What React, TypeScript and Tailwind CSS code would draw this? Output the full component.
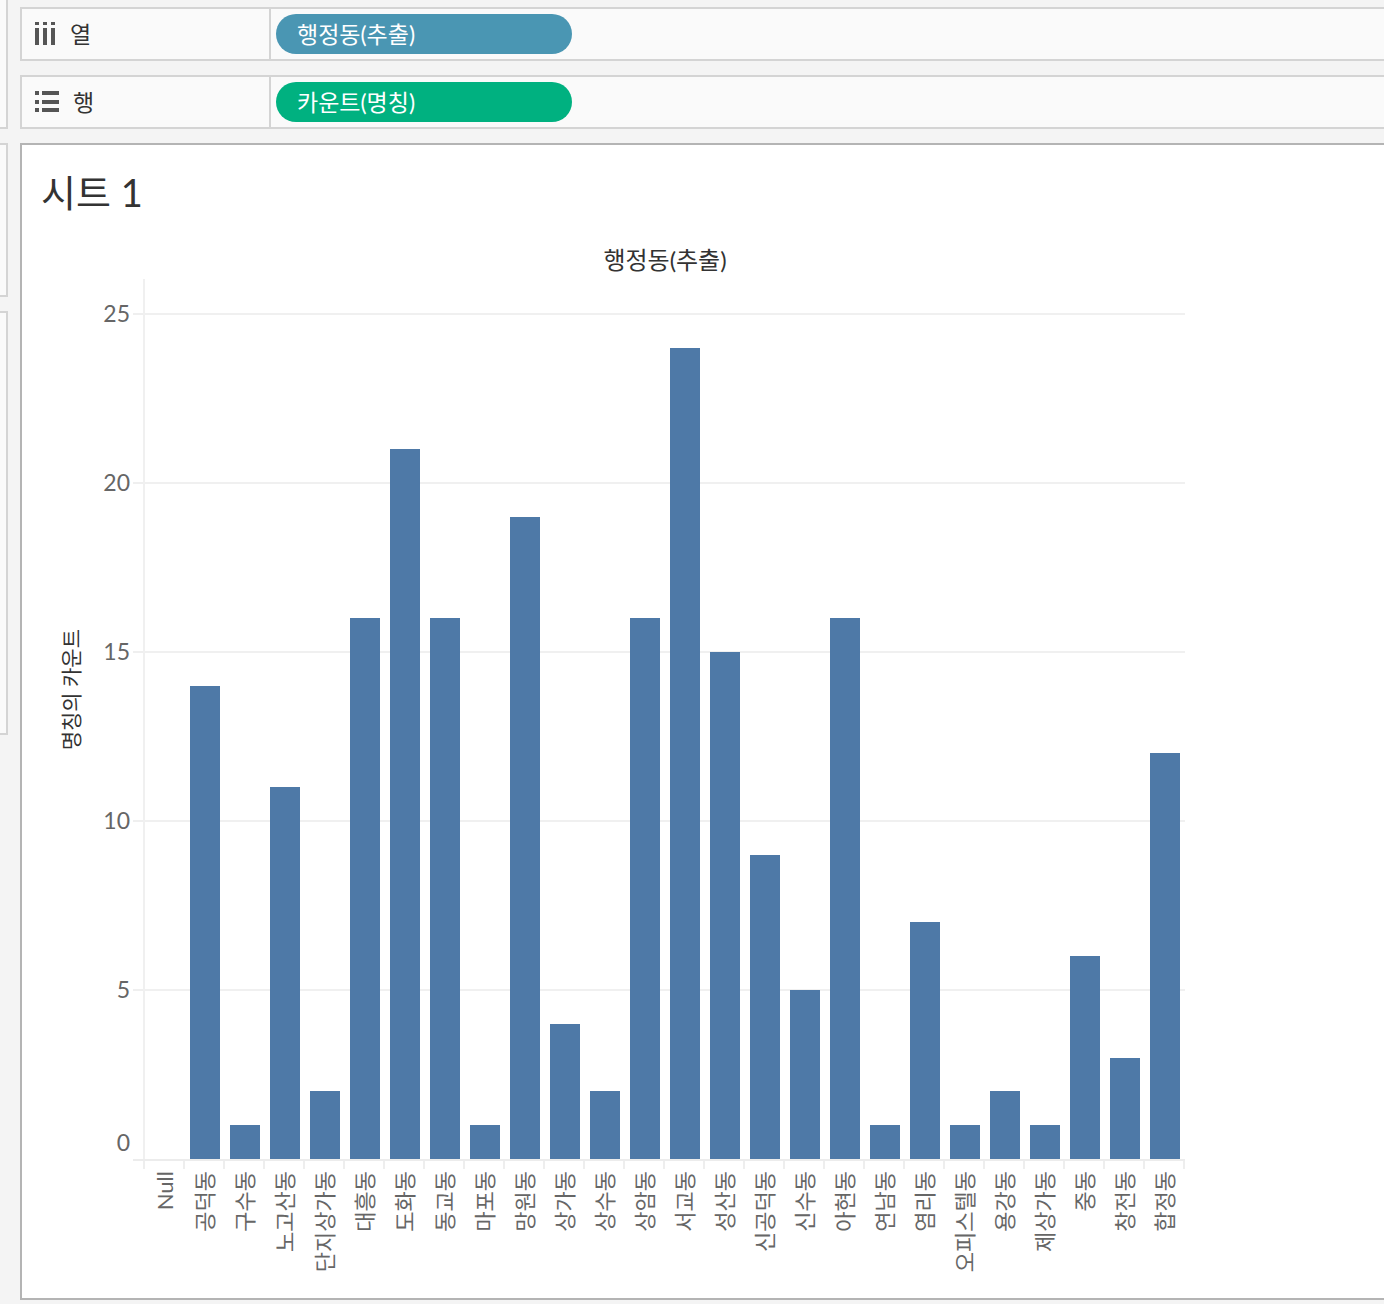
import React from "react";

const PX = 33.8;
const PLOT_H = 880;

const data: [string, number][] = [
  ["Null", 0],
  ["공덕동", 14],
  ["구수동", 1],
  ["노고산동", 11],
  ["단지상가동", 2],
  ["대흥동", 16],
  ["도화동", 21],
  ["동교동", 16],
  ["마포동", 1],
  ["망원동", 19],
  ["상가동", 4],
  ["상수동", 2],
  ["상암동", 16],
  ["서교동", 24],
  ["성산동", 15],
  ["신공덕동", 9],
  ["신수동", 5],
  ["아현동", 16],
  ["연남동", 1],
  ["염리동", 7],
  ["오피스텔동", 1],
  ["용강동", 2],
  ["제상가동", 1],
  ["중동", 6],
  ["창전동", 3],
  ["합정동", 12],
];

const ticks = [25, 20, 15, 10, 5, 0];

const ColumnsIcon = () => (
  <svg width="22" height="24" viewBox="0 0 22 24" fill="#555">
    <rect x="0" y="0" width="4" height="3" />
    <rect x="0" y="6" width="4" height="17" />
    <rect x="8" y="0" width="4" height="3" />
    <rect x="8" y="6" width="4" height="17" />
    <rect x="16" y="0" width="4" height="3" />
    <rect x="16" y="6" width="4" height="17" />
  </svg>
);

const RowsIcon = () => (
  <svg width="25" height="22" viewBox="0 0 25 22" fill="#555">
    <rect x="0" y="0" width="4" height="4" />
    <rect x="7" y="0" width="17" height="4" />
    <rect x="0" y="9" width="4" height="4" />
    <rect x="7" y="9" width="17" height="4" />
    <rect x="0" y="17" width="4" height="4" />
    <rect x="7" y="17" width="17" height="4" />
  </svg>
);

const Shelf = ({
  icon,
  label,
  pill,
  color,
}: {
  icon: React.ReactNode;
  label: string;
  pill: string;
  color: string;
}) => (
  <div className="flex h-[54px] w-[1380px] border-2 border-r-0 border-[#d4d4d4] bg-[#fafafa]">
    <div className="flex w-[249px] items-center gap-[13px] border-r-2 border-[#d4d4d4] pl-[13px]">
      {icon}
      <span className="text-[23px] leading-none text-[#333]">{label}</span>
    </div>
    <div className="flex items-center pl-[5px]">
      <div
        className={`flex h-[40px] w-[296px] items-center rounded-full pl-[21px] text-[23px] text-white ${color}`}
      >
        {pill}
      </div>
    </div>
  </div>
);

export default function App() {
  return (
    <div className="flex h-[1304px] w-[1384px] overflow-hidden bg-[#f4f4f4] font-['Lato','Noto_Sans_CJK_KR',sans-serif]">
      {/* side panels, cut off at the left edge */}
      <div className="flex w-[8px] shrink-0 flex-col gap-[14px]">
        <div className="h-[129px] border-b-2 border-r-2 border-[#d4d4d4] bg-[#fafafa]" />
        <div className="h-[154px] border-y-2 border-r-2 border-[#d4d4d4] bg-[#fafafa]" />
        <div className="h-[424px] border-y-2 border-r-2 border-[#d4d4d4] bg-[#fafafa]" />
      </div>

      <div className="ml-[12px] flex flex-col pt-[7px]">
        <Shelf icon={<ColumnsIcon />} label="열" pill="행정동(추출)" color="bg-[#4a96b3]" />
        <div className="h-[14px]" />
        <Shelf icon={<RowsIcon />} label="행" pill="카운트(명칭)" color="bg-[#00b180]" />
        <div className="h-[14px]" />

        {/* sheet */}
        <div className="h-[1157px] w-[1380px] overflow-hidden border-2 border-r-0 border-[#b4b4b4] bg-white">
          <div className="pl-[19px] pt-[25px] text-[38px] leading-[44px] text-[#333]">시트 1</div>

          <div className="mt-[32px] flex">
            <div className="w-[123px]" />
            <div className="w-[1040px] text-center text-[24px] leading-[28px] text-[#333]">행정동(추출)</div>
          </div>

          <div className="mt-[5px] flex">
            {/* y axis */}
            <div className="relative flex h-[880px] w-[123px] border-r-2 border-[#f0f0f0]">
              <div className="flex w-[96px] items-start justify-center pt-[350px]">
                <span className="rotate-180 text-[21px] leading-none text-[#333] [text-orientation:sideways] [writing-mode:vertical-rl]">
                  명칭의 카운트
                </span>
              </div>
              {ticks.map((v) => (
                <React.Fragment key={v}>
                  <div
                    className="absolute right-[13px] text-[23px] leading-[22px] text-[#666]"
                    style={{ top: v === 0 ? 852 : PLOT_H - v * PX - 12 }}
                  >
                    {v}
                  </div>
                  {v > 0 && (
                    <div
                      className="absolute right-0 h-[2px] w-[10px] bg-[#efefef]"
                      style={{ top: PLOT_H - v * PX - 1 }}
                    />
                  )}
                </React.Fragment>
              ))}
            </div>

            {/* plot */}
            <div className="relative h-[880px] w-[1040px]">
              {ticks
                .filter((v) => v > 0)
                .map((v) => (
                  <div
                    key={v}
                    className="absolute left-0 right-0 h-[2px] bg-[#f0f0f0]"
                    style={{ top: PLOT_H - v * PX - 1 }}
                  />
                ))}
              <div className="relative flex h-full items-end">
                {data.map(([name, v]) => (
                  <div key={name} className="flex w-[40px] justify-center">
                    <div className="w-[30px] bg-[#4e79a7]" style={{ height: v * PX }} />
                  </div>
                ))}
              </div>
            </div>
          </div>

          {/* x axis */}
          <div className="ml-[111px] h-[2px] w-[1052px] bg-[#ececec]" />
          <div className="ml-[121px] flex h-[8px]">
            {data.map(([name]) => (
              <div key={name} className="w-[40px] border-l-2 border-[#eeeeee]" />
            ))}
            <div className="w-[2px] bg-[#eeeeee]" />
          </div>
          <div className="ml-[123px] flex pt-[2px]">
            {data.map(([name]) => (
              <div key={name} className="flex w-[40px] items-start justify-center">
                <span className="rotate-180 text-[22px] leading-none text-[#666] [text-orientation:sideways] [writing-mode:vertical-rl]">
                  {name}
                </span>
              </div>
            ))}
          </div>
        </div>
      </div>
    </div>
  );
}
